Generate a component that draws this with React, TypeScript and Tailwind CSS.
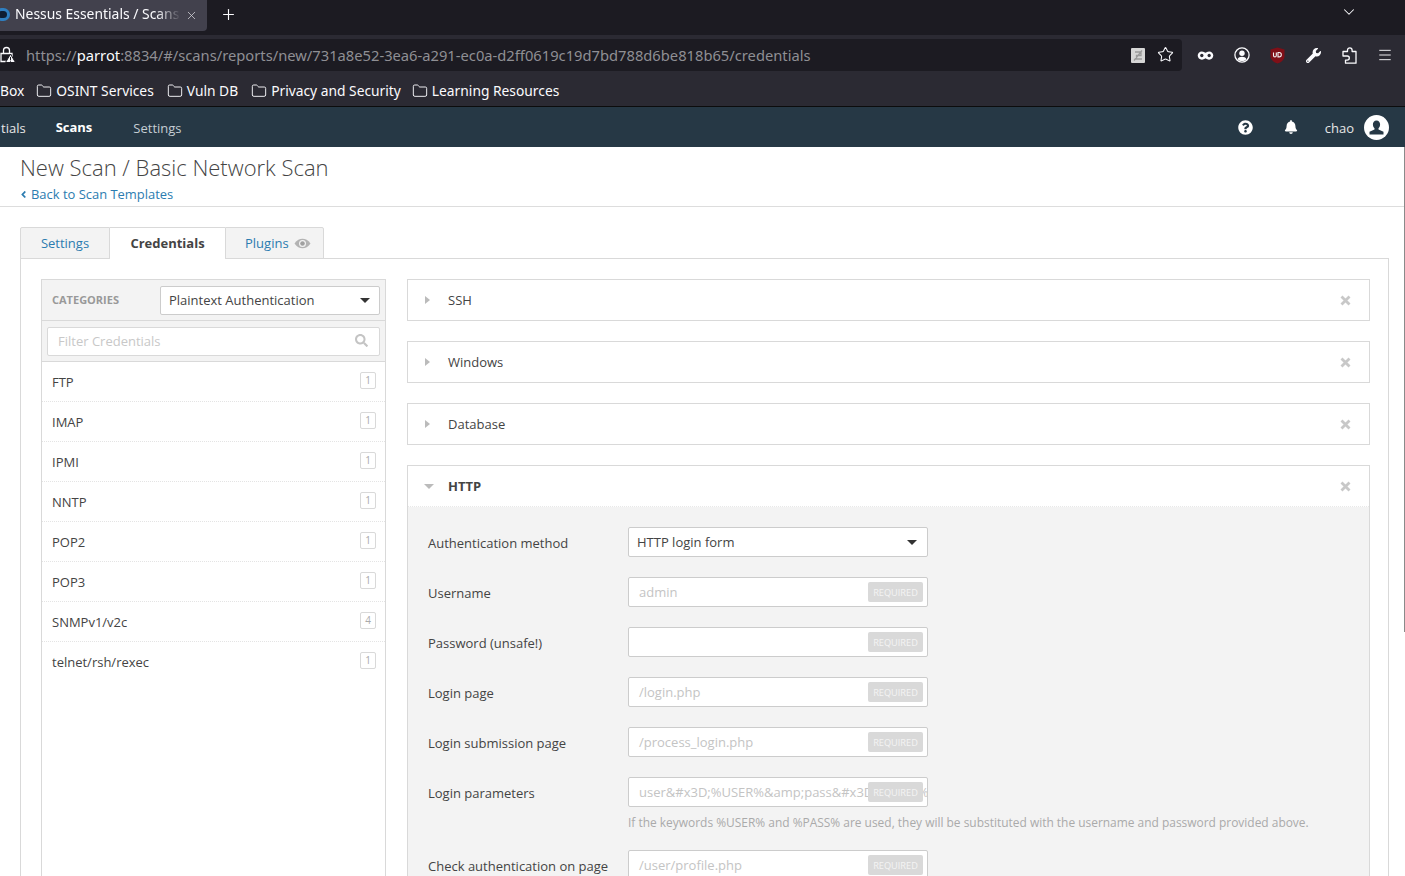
import React from "react";
import { Plus, ChevronDown, Star, Menu, Folder, X as LucideX } from "lucide-react";
import { FaSearch, FaBell, FaQuestionCircle, FaAngleLeft, FaWrench } from "react-icons/fa";

const sans = "font-['Open_Sans',sans-serif]";
const chrome = "font-['Noto_Sans',sans-serif]";

function Caret({ className = "" }: { className?: string }) {
  return (
    <svg width="10" height="5" viewBox="0 0 10 5" className={className}>
      <path d="M0 0h10L5 5z" fill="currentColor" />
    </svg>
  );
}

function CloseX() {
  return (
    <svg width="11" height="11" viewBox="0 0 11 11" className="text-[#c8c8c8]">
      <path d="M1.500 1.500l8 8M9.500 1.500l-8 8" stroke="currentColor" strokeWidth="2.800" />
    </svg>
  );
}

function Bookmark({ label }: { label: string }) {
  return (
    <div className="flex items-center gap-[4px] last:ml-[-2px]">
      <Folder size={16} strokeWidth={1.4} className="text-[#fbfbfe]" />
      <span>{label}</span>
    </div>
  );
}

function Accordion({ label }: { label: string }) {
  return (
    <div className="h-[42px] shrink-0 border border-[#d9d9d9] flex items-center pl-[17px] pr-[18px] bg-white">
      <svg width="5" height="8" viewBox="0 0 5 8" className="text-[#bbbbbb]"><path d="M0 0l5 4-5 4z" fill="currentColor" /></svg>
      <span className="ml-[18px] pt-[1px] text-[13px] text-[#444444] flex-1">{label}</span>
      <CloseX />
    </div>
  );
}

function Field({ label, placeholder, mt = "mt-5", children }: { label: string; placeholder: string; mt?: string; children?: React.ReactNode }) {
  return (
    <div className={mt}>
      <div className="flex items-center">
        <div className="w-[200px] pt-[3px] text-[13px] text-[#444444]">{label}</div>
        <div className="w-[300px] h-[30px] pt-[1px] bg-white border border-[#cccccc] rounded-[2px] relative overflow-hidden flex items-center pl-[10px] whitespace-nowrap text-[13px] text-[#c4c4c4]">
          {placeholder}
          <div className="absolute right-[4px] top-[4px] w-[55px] h-[20px] pt-[1px] bg-[#d9d9d9] rounded-[2px] flex items-center justify-center text-[9.2px] text-[#f4f4f4]">REQUIRED</div>
        </div>
      </div>
      {children}
    </div>
  );
}

const cats: [string, number][] = [["FTP", 1], ["IMAP", 1], ["IPMI", 1], ["NNTP", 1], ["POP2", 1], ["POP3", 1], ["SNMPv1/v2c", 4], ["telnet/rsh/rexec", 1]];

export default function App() {
  return (
    <div className="w-[1405px] h-[876px] overflow-hidden relative flex flex-col bg-white">
      {/* Tab strip */}
      <div className={`h-[35px] shrink-0 bg-[#1c1b22] flex items-start text-[#fbfbfe] ${chrome}`}>
        <div className="w-[207px] h-[31px] bg-[#42414d] rounded-br-[4px] flex items-center relative">
          <div className="absolute left-[-5px] top-[8px] w-[15px] h-[13px] rounded-full border-[3px] border-[#2f7fc1] bg-[#0f1e33]" />
          <span className="ml-[15px] w-[166px] overflow-hidden whitespace-nowrap text-[13.9px] leading-[28px] pb-[3px] [mask-image:linear-gradient(to_right,black_85%,transparent)]">Nessus Essentials / Scans</span>
          <LucideX size={13} strokeWidth={1.4} className="ml-[4px] text-[#d8d8dc]" />
        </div>
        <Plus size={17} strokeWidth={1.6} className="ml-[13px] mt-[6px]" />
        <div className="flex-1" />
        <ChevronDown size={18} strokeWidth={1.4} className="mr-[47px] mt-[3px]" />
      </div>

      {/* Toolbar */}
      <div className={`h-[40px] shrink-0 bg-[#2b2a33] flex items-center text-[#fbfbfe] ${chrome}`}>
        <div className="w-[1182px] h-[32px] mt-[-1px] bg-[#1c1b22] rounded-r-[4px] flex items-center relative">
          <svg width="16" height="17" viewBox="0 0 16 17">
            <path d="M3.500 7V4.500a3 3 0 0 1 6 0V7M1 7.500h11v8H1z" fill="none" stroke="#fbfbfe" strokeWidth="1.300" />
            <path d="M10.500 8l5 8.500h-10z" fill="#fbfbfe" stroke="#1c1b22" />
            <path d="M10.500 11v3M10.500 14.700v1" stroke="#1c1b22" strokeWidth="1" />
          </svg>
          <div className="ml-[10px] pt-[1px] text-[14.72px] text-[#8f8f94] whitespace-nowrap">https://<span className="text-[#fbfbfe]">parrot</span>:8834/#/scans/reports/new/731a8e52-3ea6-a291-ec0a-d2ff0619c19d7bd788d6be818b65/credentials</div>
          <div className="absolute left-[1131px] top-[9px] w-[14px] h-[15px] bg-[#d6d6d6] rounded-[1px] flex items-center justify-center">
            <svg width="12" height="13" viewBox="0 0 12 13"><path d="M3 3h6v3.500H4.500V10H10M2 11.500l8-10" fill="none" stroke="#9a9a9a" strokeWidth="1.300" /></svg>
          </div>
          <Star size={17} strokeWidth={1.5} className="absolute left-[1157px] top-[7px]" />
        </div>
        <svg width="17" height="11" viewBox="0 0 18 12" className="ml-[15px]">
          <path d="M5 1.500c2 0 3 1 4 1.500 1-.5 2-1.500 4-1.500 2.500 0 4.500 2 4.500 4.500s-2 4.500-4.500 4.500c-2 0-3-1-4-1.500-1 .5-2 1.500-4 1.500C2.500 10.500.5 8.500.5 6S2.500 1.500 5 1.500z" fill="#fbfbfe" />
          <circle cx="5" cy="6" r="1.800" fill="#2b2a33" /><circle cx="13" cy="6" r="1.800" fill="#2b2a33" />
        </svg>
        <svg width="16" height="16" viewBox="0 0 16 16" className="ml-[20px]">
          <circle cx="8" cy="8" r="7.100" fill="none" stroke="#fbfbfe" strokeWidth="1.300" />
          <circle cx="8" cy="6.300" r="2.700" fill="#fbfbfe" />
          <path d="M3.500 12.200c.8-1.700 2.500-2.400 4.500-2.400s3.700.7 4.500 2.400C11.300 13.500 9.700 14.100 8 14.100s-3.300-.6-4.500-1.900z" fill="#fbfbfe" />
        </svg>
        <svg width="15" height="17" viewBox="0 0 15 17" className="ml-[20px]">
          <path d="M.5 2.500L7.500.5l7 2v7c0 3-3.500 6-7 7-3.500-1-7-4-7-7z" fill="#7f0f17" />
          <path d="M3.500 5.500v3a1.400 1.400 0 0 0 2.800 0v-3M8 5.500v4.400h1.200c2.800 0 2.800-4.400 0-4.400z" fill="none" stroke="#f2f2f2" strokeWidth="1.100" />
        </svg>
        <FaWrench size={15} className="ml-[21px]" />
        <svg width="15" height="17" viewBox="0 0 15 17" className="ml-[21px]">
          <path d="M5.500 4.500V3.200a2.300 2.300 0 0 1 4.600 0v1.300h3.900v11.700H3.500v-3h1.700a2 2 0 0 0 0-4.200H1V4.500z" fill="none" stroke="#fbfbfe" strokeWidth="1.300" strokeLinejoin="round" />
        </svg>
        <Menu size={16} strokeWidth={1.4} className="ml-[20px]" />
      </div>

      {/* Bookmarks */}
      <div className={`h-[31px] shrink-0 bg-[#2b2a33] border-b border-[#0c0c0d] box-content flex items-center text-[13.8px] text-[#fbfbfe] ${chrome}`}>
        <div className="flex items-center gap-[13px] pt-[1px]">
          <span className="mr-[-1px]">Box</span>
          <Bookmark label="OSINT Services" />
          <Bookmark label="Vuln DB" />
          <Bookmark label="Privacy and Security" />
          <Bookmark label="Learning Resources" />
        </div>
      </div>

      <div className={`flex-1 min-h-0 flex flex-col ${sans}`}>
        {/* App nav */}
        <div className="h-[40px] shrink-0 bg-[#263845] flex items-center text-white text-[13px]">
          <span className="text-[#e6e6e6] pt-[3px] pl-[1px]">tials</span>
          <span className="ml-[30px] font-bold pt-[1px]">Scans</span>
          <span className="ml-[41px] text-[#c5cdd3] pt-[3px]">Settings</span>
          <div className="flex-1" />
          <FaQuestionCircle size={15} className="text-white mr-[31px]" />
          <FaBell size={14} className="text-white mr-[27px]" />
          <span className="text-[#e6e6e6] pt-[3px]">chao</span>
          <div className="w-[25px] h-[25px] rounded-full bg-white ml-[10px] mr-[16px] overflow-hidden flex items-center justify-center">
            <svg width="17" height="17" viewBox="0 0 17 17"><path d="M8.500 1.500c2.300 0 3.600 1.800 3.600 4 0 1.500-.7 3-1.600 3.800v1.200l5 2.300v2.700H1.500v-2.700l5-2.300V9.300c-.9-.8-1.600-2.300-1.600-3.800 0-2.200 1.300-4 3.600-4z" fill="#263845" /></svg>
          </div>
        </div>

        {/* Title */}
        <div className="h-[60px] shrink-0 border-b border-[#dddddd] pl-[20px] pt-[5px]">
          <div className="text-[22px] leading-[30px] font-light text-[#444444]">New Scan / Basic Network Scan</div>
          <div className="flex items-center text-[12.95px] leading-[18px] mt-[3px] text-[#2c7cb0]">
            <FaAngleLeft size={11} className="ml-[-2px]" />
            <span className="ml-[2px]">Back to Scan Templates</span>
          </div>
        </div>

        {/* Tabs */}
        <div className="pl-[20px] pr-[16px] pt-[20px] flex-1 min-h-0 flex flex-col">
          <div className="flex h-[32px] shrink-0 text-[13px] relative z-10">
            <div className="w-[90px] h-[32px] pt-[1px] bg-[#f3f3f3] border border-[#d9d9d9] rounded-tl-[2px] flex items-center justify-center text-[#2c7cb0]">Settings</div>
            <div className="w-[115px] h-[32px] bg-white border-t border-[#d9d9d9] flex items-center justify-center font-bold text-[#444444]">Credentials</div>
            <div className="w-[99px] h-[32px] pt-[1px] bg-[#f3f3f3] border border-[#d9d9d9] rounded-tr-[2px] flex items-center pl-[19px] gap-[5px] text-[#2c7cb0]">
              Plugins
              <svg width="17" height="11" viewBox="0 0 17 11"><path d="M.5 5.500C3 2 5.500.8 8.500.8s5.500 1.200 8 4.700c-2.500 3.500-5 4.700-8 4.700S3 9 .5 5.500z" fill="#b3b3b3" /><circle cx="8.500" cy="5.500" r="3.500" fill="#f3f3f3" /><circle cx="8.500" cy="5.500" r="2.300" fill="#a0a0a0" /></svg>
            </div>
          </div>
          <div className="flex-1 min-h-0 mt-[-1px] border-x border-t border-[#d9d9d9] px-[20px] pt-[20px] flex gap-[21px]">
            {/* Left panel */}
            <div className="w-[345px] shrink-0 border-x border-t border-[#d9d9d9] text-[13px]">
              <div className="h-[41px] bg-[#f3f3f3] border-b border-[#d9d9d9] flex items-center pl-[10px] pr-[5px]">
                <span className="text-[11px] font-bold text-[#999999] flex-1 pt-[1px]">CATEGORIES</span>
                <div className="w-[220px] h-[29px] pt-[1px] bg-white border border-[#cccccc] rounded-[2px] flex items-center pl-[8px] pr-[9px] text-[#444444]">
                  <span className="flex-1">Plaintext Authentication</span>
                  <Caret className="text-[#333333]" />
                </div>
              </div>
              <div className="h-[41px] bg-[#f3f3f3] border-b border-[#d9d9d9] flex items-center px-[5px]">
                <div className="w-full h-[29px] pt-[1px] bg-white border border-[#d9d9d9] rounded-[2px] flex items-center pl-[10px] pr-[11px] text-[#c8c8c8]">
                  <span className="flex-1">Filter Credentials</span>
                  <FaSearch size={13} className="text-[#c4c4c4] mt-[-2px]" />
                </div>
              </div>
              {cats.map(([name, n]) => (
                <div key={name} className="h-[40px] pt-[2px] last:pt-[1px] border-b border-dotted border-[#e4e4e4] last:border-b-0 flex items-center pl-[10px] pr-[9px] text-[#444444]">
                  <span className="flex-1">{name}</span>
                  <span className="w-[16px] h-[17px] mt-[-5px] border border-[#d9d9d9] rounded-[2px] flex items-center justify-center text-[10px] text-[#aaaaaa]">{n}</span>
                </div>
              ))}
            </div>

            {/* Right panel */}
            <div className="w-[963px] shrink-0 flex flex-col gap-[20px]">
              <Accordion label="SSH" />
              <Accordion label="Windows" />
              <Accordion label="Database" />
              <div className="border-x border-t border-[#d9d9d9] flex-1 bg-[#f3f3f3]">
                <div className="h-[41px] bg-white border-b border-dotted border-[#e8e8e8] flex items-center pl-[16px] pr-[18px]">
                  <Caret className="text-[#bbbbbb]" />
                  <span className="ml-[14px] pt-[1px] text-[13px] font-bold text-[#444444] flex-1">HTTP</span>
                  <CloseX />
                </div>
                <div className="pl-[20px] pt-[20px]">
                  <div className="flex items-center">
                    <div className="w-[200px] pt-[3px] text-[13px] text-[#444444]">Authentication method</div>
                    <div className="w-[300px] h-[30px] pt-[1px] bg-white border border-[#cccccc] rounded-[2px] flex items-center pl-[8px] pr-[10px] text-[13px] text-[#444444]">
                      <span className="flex-1">HTTP login form</span>
                      <Caret className="text-[#333333]" />
                    </div>
                  </div>
                  <Field label="Username" placeholder="admin" />
                  <Field label="Password (unsafe!)" placeholder="" />
                  <Field label="Login page" placeholder="/login.php" />
                  <Field label="Login submission page" placeholder="/process_login.php" />
                  <Field label="Login parameters" placeholder={"user&#x3D;%USER%&amp;pass&#x3D;%PASS%"}>
                    <div className="ml-[200px] mt-[7px] h-[18px] text-[11.95px] leading-[18px] text-[#aaaaaa] whitespace-nowrap">If the keywords %USER% and %PASS% are used, they will be substituted with the username and password provided above.</div>
                  </Field>
                  <Field label="Check authentication on page" placeholder="/user/profile.php" mt="mt-[18px]" />
                </div>
              </div>
            </div>
          </div>
        </div>
      </div>
      <div className="absolute right-0 top-[147px] w-[1px] h-[485px] bg-[#8a8a8a]" />
    </div>
  );
}
